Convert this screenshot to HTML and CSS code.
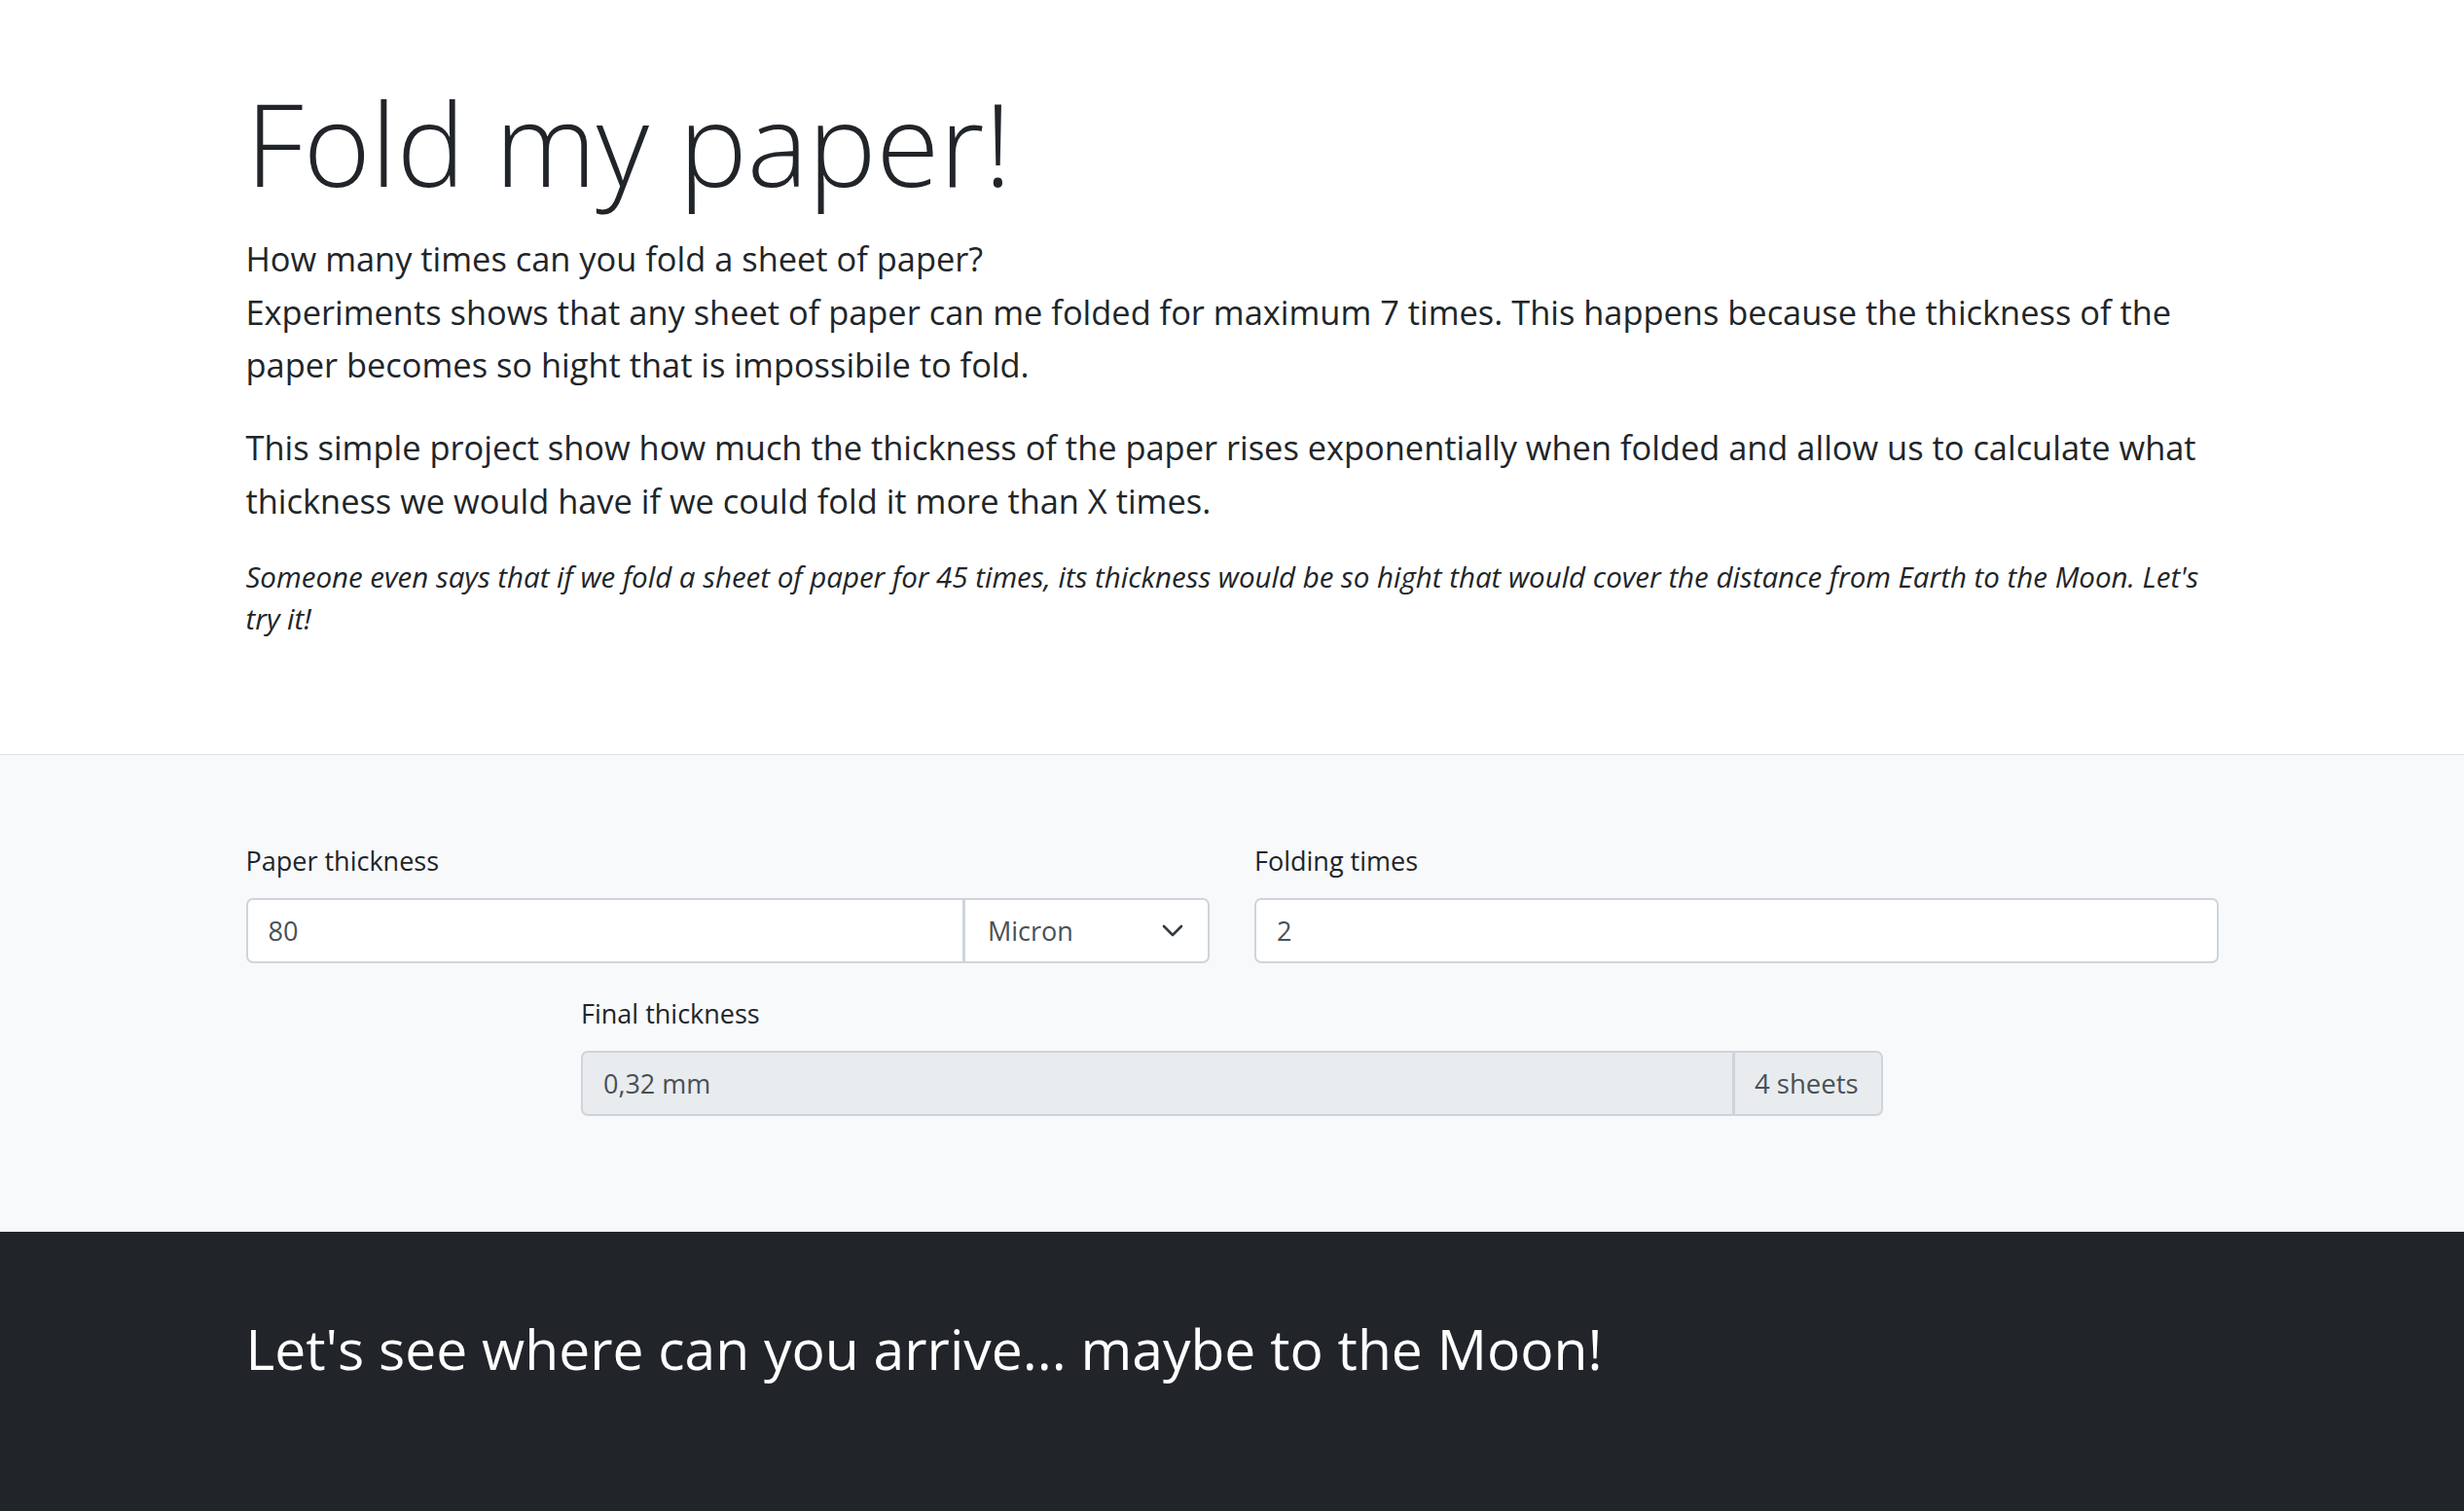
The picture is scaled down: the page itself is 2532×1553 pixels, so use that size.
FILE: index.html
```html
<!DOCTYPE html>
<html lang="en">
<head>
<meta charset="utf-8">
<title>Fold my paper!</title>
<link rel="stylesheet" href="styles.css">
</head>
<body>
<header class="hero">
  <div class="container">
    <h1 class="title">Fold my paper!</h1>
    <p class="lead">How many times can you fold a sheet of paper?<br>Experiments shows that any sheet of paper can me folded for maximum 7 times. This happens because the thickness of the paper becomes so hight that is impossibile to fold.</p>
    <p class="lead lead-2">This simple project show how much the thickness of the paper rises exponentially when folded and allow us to calculate what thickness we would have if we could fold it more than X times.</p>
    <p class="note">Someone even says that if we fold a sheet of paper for 45 times, its thickness would be so hight that would cover the distance from Earth to the Moon. Let's try it!</p>
  </div>
</header>
<section class="calc">
  <div class="container">
    <div class="row">
      <div class="field">
        <div class="label">Paper thickness</div>
        <div class="group">
          <div class="control control-first">80</div>
          <div class="select">Micron
            <svg class="chev" width="22" height="13" viewBox="0 0 22 13"><path d="M2 2 L11 11 L20 2" fill="none" stroke="#343a40" stroke-width="2.6" stroke-linecap="round" stroke-linejoin="round"/></svg>
          </div>
        </div>
      </div>
      <div class="field">
        <div class="label">Folding times</div>
        <div class="control">2</div>
      </div>
    </div>
    <div class="row-center">
      <div class="field result">
        <div class="label">Final thickness</div>
        <div class="group">
          <div class="control control-first readonly">0,32 mm</div>
          <div class="addon">4 sheets</div>
        </div>
      </div>
    </div>
  </div>
</section>
<footer class="moon">
  <div class="container">
    <h2 class="moon-title">Let's see where can you arrive... maybe to the Moon!</h2>
  </div>
</footer>
</body>
</html>
```

FILE: styles.css
```css
html, body {
  margin: 0;
  padding: 0;
}
body {
  font-family: "Open Sans", "Noto Sans", sans-serif;
  color: #212529;
  background: #212529;
}
.container {
  width: 2027px;
  margin: 0 auto;
}
.hero {
  background: #fff;
  border-bottom: 1px solid #dee2e6;
  padding-top: 78px;
  height: 697px;
}
.title {
  margin: 0;
  font-size: 118px;
  font-weight: 300;
  line-height: 138px;
}
.lead {
  margin: 23px 0 0;
  font-size: 34.4px;
  font-weight: 400;
  line-height: 54.5px;
}
.lead-2 {
  margin-top: 30.5px;
}
.note {
  margin: 30px 0 0;
  font-size: 29.5px;
  font-style: italic;
  line-height: 42.5px;
}
.calc {
  background: #f8f9fa;
  padding: 90px 0 119px;
}
.row {
  display: grid;
  grid-template-columns: 1fr 1fr;
  gap: 46px;
}
.row-center {
  display: flex;
  justify-content: center;
  margin-top: 33px;
}
.result {
  width: 1338px;
}
.label {
  font-size: 27px;
  line-height: 37.5px;
  margin-bottom: 19.5px;
}
.group {
  display: flex;
}
.control {
  flex: 1;
  height: 67px;
  box-sizing: border-box;
  border: 2px solid #ced4da;
  border-radius: 7px;
  background: #fff;
  display: flex;
  align-items: center;
  padding: 0 21px;
  font-size: 27px;
  color: #495057;
}
.control-first {
  border-top-right-radius: 0;
  border-bottom-right-radius: 0;
}
.readonly {
  background: #e9ecef;
}
.select {
  width: 252px;
  height: 67px;
  box-sizing: border-box;
  border: 2px solid #ced4da;
  border-left: 1px solid #ced4da;
  border-radius: 0 7px 7px 0;
  background: #fff;
  display: flex;
  align-items: center;
  justify-content: space-between;
  padding: 0 25px 0 23px;
  font-size: 27px;
  color: #495057;
}
.addon {
  width: 153px;
  height: 67px;
  box-sizing: border-box;
  border: 2px solid #ced4da;
  border-left: 1px solid #ced4da;
  border-radius: 0 7px 7px 0;
  background: #e9ecef;
  display: flex;
  align-items: center;
  padding: 0 20px;
  font-size: 27.5px;
  color: #495057;
}
.moon {
  background: #212529;
  padding: 86px 0 140px;
}
.moon-title {
  margin: 0;
  color: #fff;
  font-size: 57px;
  font-weight: 500;
  line-height: 1.2;
}
```
